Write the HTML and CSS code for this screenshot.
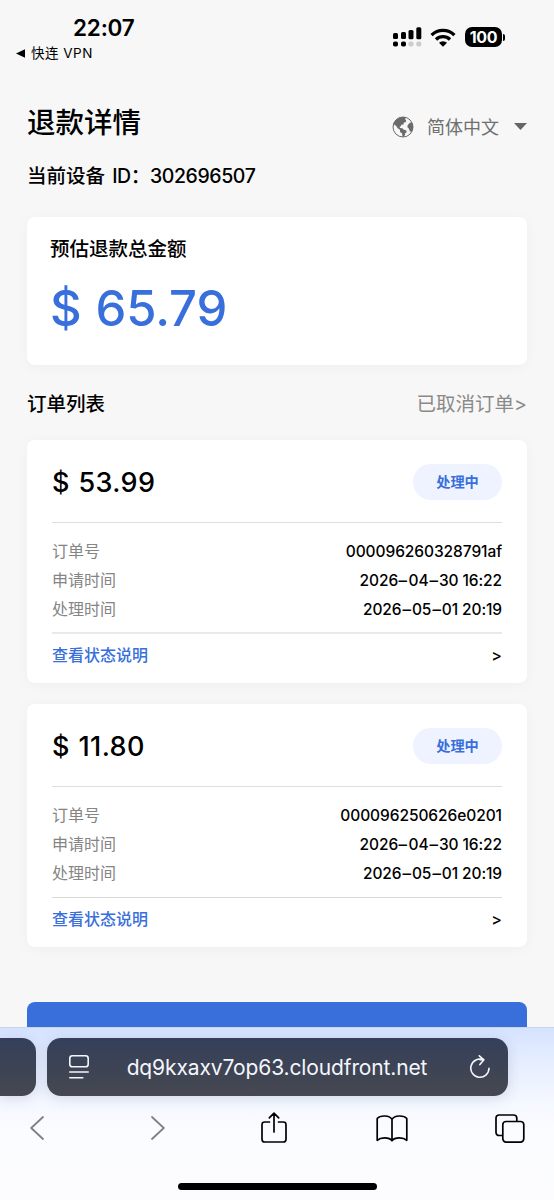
FILE: index.html
```html
<!DOCTYPE html>
<html lang="zh-CN">
<head>
<meta charset="utf-8">
<meta name="viewport" content="width=device-width, initial-scale=1">
<title>退款详情</title>
<link rel="stylesheet" href="styles.css">
</head>
<body>
<div class="screen">
  <header class="status">
    <div class="status-left">
      <div class="clock">22:07</div>
      <div class="back-app"><svg width="9" height="9" viewBox="0 0 9 9"><path d="M0 4.5 9 .2v8.6z" fill="#000"/></svg><span>快连 VPN</span></div>
    </div>
    <div class="status-right">
      <svg class="signal" width="30" height="20" viewBox="0 0 30 20">
        <g fill="#000"><rect x="1" y="6" width="5" height="6" rx="1.5"/><rect x="9" y="5" width="5" height="7" rx="1.5"/><rect x="16.500" y="3" width="5" height="9.200" rx="1.500"/><rect x="24.300" y="0.300" width="5" height="12" rx="1.500"/><rect x="1" y="14.500" width="5" height="5" rx="1.800"/><rect x="9" y="14.500" width="5" height="5" rx="1.800"/></g>
        <g fill="#ccc"><rect x="16.500" y="14.500" width="5" height="5" rx="1.800"/><rect x="24.300" y="14.500" width="5" height="5" rx="1.800"/></g>
      </svg>
      <svg class="wifi" width="26" height="19" viewBox="0 0 26 19">
        <g fill="none" stroke="#000" stroke-width="3.300"><path d="M1.600 7.100A16.200 16.200 0 0 1 24.400 7.100"/><path d="M6 11.500a10 10 0 0 1 14 0"/></g>
        <path d="M9 14.800a5.700 5.700 0 0 1 8 0L13 18.800z" fill="#000"/>
      </svg>
      <div class="battery"><span class="level">100</span><i class="cap"></i></div>
    </div>
  </header>

  <main class="page">
    <div class="title-row">
      <h1>退款详情</h1>
      <div class="language">
        <svg width="22" height="22" viewBox="0 0 22 22">
          <circle cx="11" cy="11" r="10" fill="#f7f7f7" stroke="#6b6b6b" stroke-width="1"/>
          <path fill="#6b6b6b" d="M1 10.500C1.300 5.500 5.500 1 11 1c1 0 1.900.1 2.800.4l-.6 1.800.9 1.300-.3 1.700-2 .2-.3 2.200-2.300.2-.2 1.400-1.400.4.5 1.500 2.200.1 1.600 1.500 2.500.9.200 1.600-1.500 1.400-.2 1.700-1.700 1.700-.8-.1-.2-3.300-2.100-1.600-.2-2.300-2.200-1.500-1.700-2.500L2.500 8.500zM19.600 6.200 21 9.500v3l-1.200 3.200-1.800-.2-1.400-3.300-1.200-1 .2-2 2-2.200z"/>
        </svg>
        <span class="language-name">简体中文</span>
        <svg width="13" height="7" viewBox="0 0 13 7"><path d="M0 0h13L6.500 7z" fill="#666"/></svg>
      </div>
    </div>
    <p class="device">当前设备 <span class="device-num">ID：302696507</span></p>

    <section class="card summary">
      <h2>预估退款总金额</h2>
      <div class="total">$ 65.79</div>
    </section>

    <div class="list-head"><h2>订单列表</h2><a>已取消订单&gt;</a></div>

    <section class="card order">
      <div class="order-top"><div class="amount">$ 53.99</div><span class="tag">处理中</span></div>
      <dl class="facts">
        <div><dt>订单号</dt><dd class="oid">000096260328791af</dd></div>
        <div><dt>申请时间</dt><dd>2026<i>–</i>04<i>–</i>30 16:22</dd></div>
        <div><dt>处理时间</dt><dd>2026<i>–</i>05<i>–</i>01 20:19</dd></div>
      </dl>
      <div class="more"><a>查看状态说明</a><span>&gt;</span></div>
    </section>

    <section class="card order">
      <div class="order-top"><div class="amount">$ 11.80</div><span class="tag">处理中</span></div>
      <dl class="facts">
        <div><dt>订单号</dt><dd class="oid">000096250626e0201</dd></div>
        <div><dt>申请时间</dt><dd>2026<i>–</i>04<i>–</i>30 16:22</dd></div>
        <div><dt>处理时间</dt><dd>2026<i>–</i>05<i>–</i>01 20:19</dd></div>
      </dl>
      <div class="more"><a>查看状态说明</a><span>&gt;</span></div>
    </section>

    <div class="submit"></div>
  </main>

  <footer class="browser">
    <div class="tabs">
      <div class="tab-prev"></div>
      <div class="address">
        <svg width="20" height="24" viewBox="0 0 20 24" fill="none" stroke="#f4f6fb" stroke-width="1.600" stroke-linecap="round"><rect x=".8" y=".8" width="18.400" height="11" rx="2.600"/><path d="M.8 17h18.400M.8 22.700h13"/></svg>
        <span class="url">dq9kxaxv7op63.cloudfront.net</span>
        <svg width="20" height="24" viewBox="0 0 20 24" fill="none" stroke="#f4f6fb" stroke-width="1.600" stroke-linecap="round" stroke-linejoin="round"><path d="M13.500 4.800A9.100 9.100 0 1 0 19 13.200M13.500 4.800H10M9.300.8l4.600 4-4 4.800"/></svg>
      </div>
    </div>
    <nav class="toolbar">
      <svg height="24" viewBox="0 0 14 24" fill="none" stroke="#808084" stroke-width="1.800" stroke-linecap="round" stroke-linejoin="round"><path d="M13 1 1.200 12 13 23"/></svg>
      <svg class="forward" height="24" viewBox="0 0 14 24" fill="none" stroke="#808084" stroke-width="1.800" stroke-linecap="round" stroke-linejoin="round"><path d="m1 1 11.800 11L1 23"/></svg>
      <svg height="32" viewBox="0 0 26 32" fill="none" stroke="#000" stroke-width="1.700" stroke-linecap="round" stroke-linejoin="round"><path d="M8.500 10H3.800Q1 10 1 12.800v14.400Q1 30 3.800 30h18.400q2.800 0 2.800-2.800V12.800Q25 10 22.200 10h-4.700M13 20V1.200M8.300 5.800 13 1.200l4.700 4.600"/></svg>
      <svg height="27" viewBox="0 0 32 27" fill="none" stroke="#000" stroke-width="1.700" stroke-linecap="round" stroke-linejoin="round"><path d="M16 4.200C13.500.3 4.500-.2 1.200 3.500v21.800c3.500-3.200 12-3.200 14.800.4 2.800-3.600 11.300-3.600 14.800-.4V3.500C27.500-.2 18.500.3 16 4.200zM16 4.200v21.500"/></svg>
      <svg height="29" viewBox="0 0 30 29" fill="none" stroke="#000" stroke-width="1.700" stroke-linejoin="round"><path d="M7.800 21.500H4.300Q1 21.500 1 18.200V4.200Q1 1 4.300 1h14.200q3.300 0 3.300 3.300v3"/><rect x="7.800" y="7.500" width="21" height="20.600" rx="3.300"/></svg>
    </nav>
    <div class="home"></div>
  </footer>
</div>
</body>
</html>
```
FILE: styles.css
```css
* { box-sizing: border-box; margin: 0; padding: 0; }
body { background: #f7f7f7; color: #000; font-family: Inter, "Noto Sans CJK SC", sans-serif; font-size: 16px; }
svg { display: block; flex: none; }
h1, h2 { font-weight: 500; }
.screen { width: 554px; height: 1200px; display: flex; flex-direction: column; overflow: hidden; white-space: nowrap; }

.status { height: 88px; flex: none; display: flex; justify-content: space-between; padding: 14px 49px 0 16px; }
.status-left { display: flex; flex-direction: column; }
.clock { padding-left: 57px; height: 28px; line-height: 28px; font-size: 22.5px; font-weight: 600; letter-spacing: -.2px; }
.back-app { display: flex; align-items: center; gap: 6px; height: 22px; line-height: 22px; font-size: 13.500px; font-weight: 400; letter-spacing: .5px; }
.status-right { display: flex; align-items: flex-start; padding-top: 13px; }
.wifi { margin: 1px 0 0 8px; }
.battery { display: flex; align-items: center; gap: 1px; margin-left: 9px; }
.level { width: 37px; height: 20px; border-radius: 7px; background: #000; color: #fff; text-align: center; font-size: 16px; line-height: 20px; font-weight: 700; letter-spacing: -.3px; }
.cap { width: 2px; height: 7px; border-radius: 0 2px 2px 0; background: #000; }

.page { height: 939px; flex: none; padding: 0 27px; overflow: hidden; }
.title-row { display: flex; justify-content: space-between; height: 66px; }
h1 { font-size: 28.500px; line-height: 69px; }
.language { display: flex; align-items: center; height: 77px; color: #6f6f6f; font-size: 18px; }
.language-name { margin: 0 15px 0 13px; line-height: 25px; padding-top: 1px; }
.device { height: 63px; line-height: 44px; font-size: 19.500px; font-weight: 500; word-spacing: 2px; }
.device-num { letter-spacing: -.4px; }
.card { background: #fff; border-radius: 8px; box-shadow: 0 2px 14px rgba(0, 0, 0, .04); }
.summary { height: 148px; padding: 17px 23px; }
.summary h2 { font-size: 19.500px; line-height: 30px; }
.total { color: #386fdb; font-size: 49px; font-weight: 500; line-height: 90px; letter-spacing: -.1px; word-spacing: 1px; }
.list-head { display: flex; justify-content: space-between; height: 75px; line-height: 78px; font-size: 19.500px; }
.list-head h2 { font-size: inherit; }
.list-head a { color: #8a8a8a; }
.order { height: 243px; padding: 0 25px; margin-bottom: 21.400px; }
.order-top { display: flex; align-items: center; justify-content: space-between; height: 83px; padding-top: 2px; border-bottom: 1px solid #dedede; }
.amount { font-size: 27px; font-weight: 500; letter-spacing: .4px; word-spacing: 1px; }
.tag { width: 89px; height: 36px; border-radius: 18px; background: #eef3ff; color: #386fdb; font-size: 14.200px; font-weight: 600; line-height: 35px; text-align: center; }
.facts { height: 111px; padding-top: 14px; border-bottom: 2px solid #e9e9e9; }
.order + .order .facts { border-bottom: 1px solid #d9d9d9; }
.facts div { display: flex; justify-content: space-between; height: 29px; line-height: 29px; }
dt { color: #858585; }
dd { font-weight: 500; font-size: 15.500px; letter-spacing: -.1px; }
dd i { display: inline-block; margin: 0 1.400px; font-style: normal; transform: scaleX(1.1); }
.oid { letter-spacing: -.07px; }
.more { display: flex; justify-content: space-between; line-height: 42px; }
.more a { color: #386fdb; font-weight: 500; }
.more span { font-weight: 500; }
.submit { height: 50px; margin-top: 54.200px; border-radius: 8px; background: #386fdb; }

.browser { height: 173px; flex: none; padding-top: 10px; border-top: 1px solid #ccd5e8; background: linear-gradient(#d5e3ff 0, #e7eeff 36px, #f5f8ff 76px, #fbfcff 105px, #fcfcfe); }
.tabs { display: flex; gap: 11px; height: 58px; }
.tab-prev, .address { background: linear-gradient(#343f5a, #464850); box-shadow: 0 2px 14px rgba(50, 70, 120, .17); }
.tab-prev { width: 36px; border-radius: 0 14px 14px 0; }
.address { width: 461px; border-radius: 14px; display: flex; align-items: center; justify-content: space-between; padding: 0 18px 0 22px; color: #f4f6fb; }
.url { font-size: 21px; letter-spacing: -.13px; padding-right: 5px; }
.toolbar { display: flex; align-items: center; justify-content: space-between; height: 64px; padding: 0 28px 0 21px; }
.toolbar svg { width: 32px; }
.toolbar .forward { margin-left: 3px; margin-right: -3px; }
.home { width: 199px; height: 7px; margin: 23px auto 0; border-radius: 4px; background: #000; }
```
